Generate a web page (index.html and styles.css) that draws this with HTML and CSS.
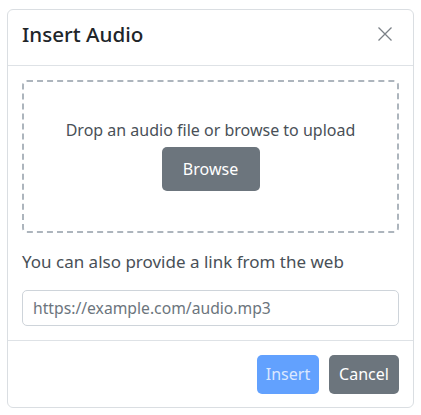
FILE: index.html
```html
<!DOCTYPE html>
<html>
<head>
<meta charset="utf-8">
<link rel="stylesheet" href="styles.css">
</head>
<body>
<div class="modal">
  <div class="modal-header">
    <h5 class="modal-title">Insert Audio</h5>
    <button class="btn-close" type="button" aria-label="Close">
      <svg width="16" height="16" viewBox="0 0 16 16"><path d="M1.5 1.5 L14.5 14.5 M14.5 1.5 L1.5 14.5" stroke="currentColor" stroke-width="1.3" fill="none"/></svg>
    </button>
  </div>
  <div class="modal-body">
    <div class="dropzone">
      <p class="drop-text">Drop an audio file or browse to upload</p>
      <button class="btn btn-browse" type="button">Browse</button>
    </div>
    <p class="link-label">You can also provide a link from the web</p>
    <input class="form-control" type="text" placeholder="https://example.com/audio.mp3">
  </div>
  <div class="modal-footer">
    <button class="btn btn-insert" type="button" disabled>Insert</button>
    <button class="btn btn-cancel" type="button">Cancel</button>
  </div>
</div>
</body>
</html>
```
FILE: styles.css
```css
html, body {
  margin: 0;
  padding: 0;
  background: #fff;
}
body {
  font-family: "Noto Sans", "Open Sans", sans-serif;
  color: #212529;
}
.modal {
  box-sizing: border-box;
  width: 407px;
  height: 399px;
  margin: 9px 0 0 7px;
  border: 1px solid #dadee2;
  border-radius: 6px;
  display: flex;
  flex-direction: column;
  background: #fff;
}
.modal-header {
  box-sizing: border-box;
  height: 56px;
  padding: 12px 14px 0 14px;
  border-bottom: 1px solid #dee2e6;
  display: flex;
  justify-content: space-between;
  align-items: flex-start;
}
.modal-title {
  margin: 0;
  font-size: 20.6px;
  line-height: 24px;
  font-weight: 500;
  color: #212529;
}
.btn-close {
  border: 0;
  background: transparent;
  padding: 0;
  margin: 4px 6px 0 0;
  width: 16px;
  height: 16px;
  color: #7b8187;
  cursor: pointer;
}
.btn-close svg {
  display: block;
}
.modal-body {
  padding: 14px;
  display: flex;
  flex-direction: column;
}
.dropzone {
  box-sizing: border-box;
  height: 153px;
  border: 2px dashed #adb5bd;
  border-radius: 5px;
  padding: 36px 0 0 0;
  display: flex;
  flex-direction: column;
  align-items: center;
}
.drop-text {
  margin: 0 0 5px 0;
  font-size: 16px;
  line-height: 24px;
  color: #495057;
}
.btn {
  font-family: inherit;
  border: 0;
  border-radius: 5px;
  color: #fff;
  cursor: pointer;
}
.btn-browse {
  width: 98px;
  height: 44px;
  font-size: 16px;
  line-height: 24px;
  padding: 0;
  background: #6c757d;
}
.link-label {
  margin: 16px 0 15px 0;
  font-size: 17px;
  line-height: 26px;
  color: #495057;
}
.form-control {
  box-sizing: border-box;
  width: 100%;
  height: 36px;
  margin: 0;
  padding: 0 10px;
  font-family: inherit;
  font-size: 15.7px;
  color: #495057;
  border: 1px solid #ced4da;
  border-radius: 5px;
  outline: none;
}
.form-control::placeholder {
  color: #6c757d;
}
.modal-footer {
  border-top: 1px solid #dee2e6;
  padding: 14px 14px 12px 14px;
  display: flex;
  justify-content: flex-end;
  gap: 10px;
}
.btn-insert,
.btn-cancel {
  height: 39px;
  font-size: 16px;
  line-height: 25px;
  padding: 0;
}
.btn-insert {
  width: 62px;
  background: #62a1fe;
  color: #dbe8ff;
  cursor: default;
}
.btn-cancel {
  width: 70px;
  background: #6c757d;
}
```
